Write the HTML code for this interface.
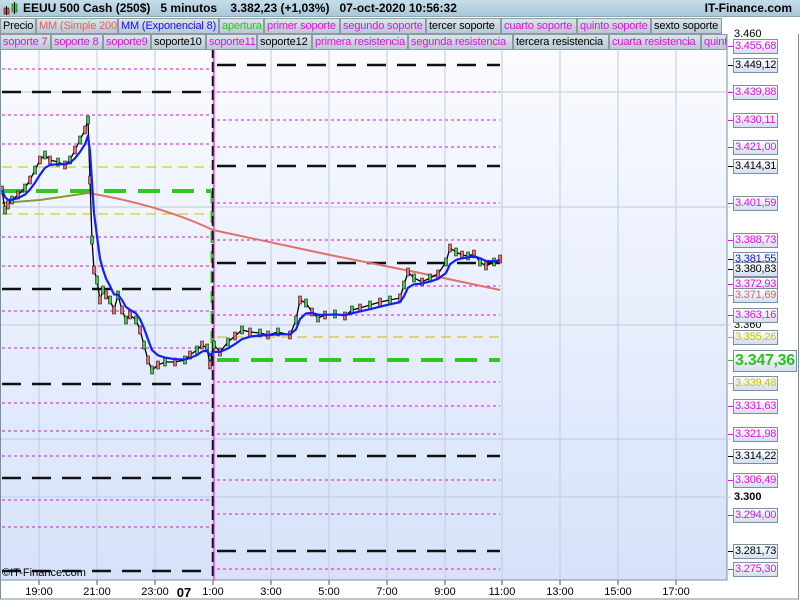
<!DOCTYPE html>
<html><head><meta charset="utf-8"><style>
*{margin:0;padding:0;box-sizing:border-box}
body{width:800px;height:600px;overflow:hidden;background:#fff;font-family:"Liberation Sans",sans-serif;position:relative}
#title{position:absolute;left:0;top:0;width:800px;height:17px;background:linear-gradient(#c6dde9,#a9c8da);border-bottom:1px solid #8aa;font-weight:bold;font-size:12px;line-height:17px}
.lg{position:absolute;height:16px;font-size:11px;line-height:15px;letter-spacing:-0.15px;background:linear-gradient(#dce4ea,#b8c8d2);border:1px solid #8a9aa8;padding-left:2px;white-space:nowrap;overflow:hidden}
.ax{position:absolute;left:733px;width:45px;height:15px;font-size:11px;letter-spacing:-0.2px;line-height:13px;text-align:left;padding-left:1px;background:linear-gradient(#fff,#d4def0);border:1px solid #7a8fa0;white-space:nowrap;overflow:hidden}
.pl{position:absolute;left:734px;font-size:11px;line-height:13px}
.tk{position:absolute;left:728px;width:5px;height:1px}
.tl{position:absolute;top:586px;font-size:11px;transform:translateX(-50%)}
</style></head><body>
<div id="title"><svg style="position:absolute;left:3px;top:2px" width="16" height="14"><rect x="1" y="6" width="5" height="6" fill="#e05050" stroke="#600" stroke-width=".6"/><line x1="3.5" y1="4" x2="3.5" y2="13" stroke="#000"/><rect x="9" y="2" width="5" height="8" fill="#40c040" stroke="#060" stroke-width=".6"/><line x1="11.5" y1="0" x2="11.5" y2="12" stroke="#000"/></svg>
<span style="position:absolute;left:23px">EEUU 500 Cash (250$)&nbsp;&nbsp;&nbsp;5 minutos&nbsp;&nbsp;&nbsp;&nbsp;3.382,23 (+1,03%)&nbsp;&nbsp;&nbsp;07-oct-2020 10:56:32</span>
<span style="position:absolute;right:8px">IT-Finance.com</span></div>
<svg id="ch" style="position:absolute;left:0;top:34px" width="800" height="566"></svg>
<div id="ov"></div>
<script>
var L1=[[0,36,'Precio','#000'],[36,82,'MM (Simple 200)','#e06060'],[118,101,'MM (Exponencial 8)','#1010ff'],[219,45,'apertura','#30c020'],[264,76,'primer soporte','#e010e0'],[340,86,'segundo soporte','#e010e0'],[426,75,'tercer soporte','#000'],[501,76,'cuarto soporte','#e010e0'],[577,74,'quinto soporte','#e010e0'],[651,71,'sexto soporte','#000']];
var L2=[[0,51,'soporte 7','#e010e0'],[51,52,'soporte 8','#e010e0'],[103,48,'soporte9','#e010e0'],[151,55,'soporte10','#000'],[206,51,'soporte11','#e010e0'],[257,55,'soporte12','#000'],[312,96,'primera resistencia','#e010e0'],[408,105,'segunda resistencia','#e010e0'],[513,96,'tercera resistencia','#000'],[609,92,'cuarta resistencia','#e010e0'],[701,26,'quinta resistencia','#e010e0']];
var h='';
L1.forEach(function(a){h+='<div class="lg" style="top:18px;left:'+a[0]+'px;width:'+a[1]+'px;color:'+a[3]+'">'+a[2]+'</div>'});
L2.forEach(function(a){h+='<div class="lg" style="top:34px;left:'+a[0]+'px;width:'+a[1]+'px;color:'+a[3]+'">'+a[2]+'</div>'});
var AX=[[46,'3.455,68','#e010e0'],[65,'3.449,12','#000'],[92,'3.439,88','#e010e0'],[120,'3.430,11','#e010e0'],[147,'3.421,00','#e010e0'],[166,'3.414,31','#000'],[203,'3.401,59','#e010e0'],[240,'3.388,73','#e010e0'],[259,'3.381,55','#1010ff'],[269,'3.380,83','#000'],[284,'3.372,93','#e010e0'],[295,'3.371,69','#e06060'],[315,'3.363,16','#e010e0'],[337,'3.355,26','#c8c000'],[383,'3.339,48','#c8c000'],[406,'3.331,63','#e010e0'],[434,'3.321,98','#e010e0'],[456,'3.314,22','#000'],[480,'3.306,49','#e010e0'],[515,'3.294,00','#e010e0'],[551,'3.281,73','#000'],[569,'3.275,30','#e010e0']];
h+='<div class="pl" style="top:28px">3.460</div><div class="pl" style="top:319px">3.360</div><div class="pl" style="top:491px;font-weight:bold">3.300</div>';
AX.forEach(function(a){h+='<div class="tk" style="top:'+a[0]+'px;background:'+a[2]+'"></div><div class="ax" style="top:'+(a[0]-7)+'px;color:'+a[2]+'">'+a[1]+'</div>'});
h+='<div class="tk" style="top:360px;background:#30c020"></div><div class="ax" style="top:350px;height:22px;width:64px;font-size:16px;line-height:20px;font-weight:bold;letter-spacing:-0.3px;color:#30c020">3.347,36</div>';
[[39,'19:00'],[97,'21:00'],[155,'23:00'],[213,'1:00'],[271,'3:00'],[329,'5:00'],[387,'7:00'],[445,'9:00'],[502,'11:00'],[560,'13:00'],[618,'15:00'],[676,'17:00']].forEach(function(t){h+='<div class="tl" style="left:'+t[0]+'px">'+t[1]+'</div>'});
h+='<div class="tl" style="left:184px;font-weight:bold;font-size:13px;top:585px">07</div>';
h+='<div style="position:absolute;left:2px;top:567px;font-size:11px">©IT-Finance.com</div>';
document.getElementById('ov').innerHTML=h;
function Y(y){return y-34}
var s='<defs><linearGradient id="bg" x1="0" y1="0" x2="0" y2="1"><stop offset="0" stop-color="#fbfcff"/><stop offset="1" stop-color="#d6e2fa"/></linearGradient></defs>';
s+='<rect x="0" y="0" width="727" height="546" fill="url(#bg)" stroke="#7a8fa0"/>';
[39,97,155,213,271,329,387,445,502,560,618,676].forEach(function(x){s+='<line x1="'+x+'" y1="0" x2="'+x+'" y2="551" stroke="#c0cce0"/>'});
[92,207,325,439,497].forEach(function(y){s+='<line x1="0" y1="'+Y(y)+'" x2="731" y2="'+Y(y)+'" stroke="#c0cce0"/>'});
function ln(x1,x2,y,t){var y2=Y(y);
 if(t=='k')s+='<line x1="'+x1+'" y1="'+y2+'" x2="'+x2+'" y2="'+y2+'" stroke="#111" stroke-width="2.5" stroke-dasharray="19,11"/>';
 else if(t=='m')s+='<line x1="'+x1+'" y1="'+y2+'" x2="'+x2+'" y2="'+y2+'" stroke="#e010e0" stroke-width="1" stroke-dasharray="3,3"/>';
 else if(t=='y')s+='<line x1="'+x1+'" y1="'+y2+'" x2="'+x2+'" y2="'+y2+'" stroke="#d0c000" stroke-width="1" stroke-dasharray="10,6"/>';
 else if(t=='g')s+='<line x1="'+x1+'" y1="'+y2+'" x2="'+x2+'" y2="'+y2+'" stroke="#30c820" stroke-width="4" stroke-dasharray="22,12"/>';
}
[[69,'m'],[92,'k'],[115,'m'],[144,'m'],[167,'y'],[191,'g'],[214,'y'],[237,'m'],[266,'m'],[289,'k'],[311,'m'],[348,'m'],[384,'k'],[403,'m'],[431,'m'],[456,'m'],[478,'k'],[500,'m'],[527,'m'],[571,'k']].forEach(function(a){ln(2,211,a[0],a[1])});
[[65,'k'],[92,'m'],[120,'m'],[147,'m'],[166,'k'],[203,'m'],[240,'m'],[263,'k'],[286,'m'],[315,'m'],[337,'y'],[360,'g'],[382,'m'],[406,'m'],[434,'m'],[456,'k'],[480,'m'],[514,'m'],[551,'k'],[569,'m']].forEach(function(a){ln(217,500,a[0],a[1])});
s+='<line x1="212" y1="'+Y(191)+'" x2="212" y2="'+Y(360)+'" stroke="#30c820" stroke-width="3" stroke-dasharray="12,8"/>';
s+='<line x1="213" y1="'+Y(48)+'" x2="213" y2="546" stroke="#111" stroke-width="2.5" stroke-dasharray="10,4"/>';
s+='<line x1="214" y1="'+Y(48)+'" x2="214" y2="546" stroke="#e010e0" stroke-width="1"/>';
s+='<path d="M88 '+Y(193)+' Q160 '+Y(205)+' 213 '+Y(230)+' L330 '+Y(255)+' L420 '+Y(273)+' L500 '+Y(290)+'" fill="none" stroke="#e07070" stroke-width="2"/>';
s+='<path d="M2 '+Y(203)+' L40 '+Y(200)+' L88 '+Y(193)+'" fill="none" stroke="#8a9a30" stroke-width="2"/>';
var P=[[2,190],[5,210],[8,205],[12,200],[18,195],[25,188],[30,180],[35,170],[40,160],[45,155],[50,160],[58,162],[65,165],[70,160],[75,150],[80,140],[85,130],[88,120],[90,180],[92,240],[94,270],[97,280],[100,300],[103,290],[106,295],[110,300],[114,310],[118,295],[122,310],[126,320],[130,315],[136,320],[140,330],[144,345],[148,360],[152,370],[158,365],[165,362],[175,362],[185,360],[190,355],[197,350],[202,345],[207,348],[210,365],[214,345],[220,352],[228,342],[235,336],[242,330],[250,332],[260,333],[268,335],[278,332],[290,335],[296,320],[300,300],[306,303],[312,312],[318,318],[325,315],[335,314],[345,316],[352,310],[360,308],[370,305],[380,302],[390,300],[400,298],[404,285],[408,272],[414,278],[422,282],[430,278],[438,274],[446,262],[450,248],[456,252],[462,255],[468,256],[474,254],[480,262],[486,266],[494,262],[500,259]];
var d='';P.forEach(function(p,i){d+=(i?'L':'M')+p[0]+' '+Y(p[1])+' '});
s+='<path d="'+d+'" fill="none" stroke="#000" stroke-width="1.3"/>';
for(var i=0;i<P.length;i+=1){var p=P[i];var up=i%2;s+='<rect x="'+(p[0]-1.5)+'" y="'+(Y(p[1])-4)+'" width="3" height="8" fill="'+(up?'#50c050':'#e07070')+'" stroke="#000" stroke-width=".5"/>'}
var e=P[0][1],d2='';P.forEach(function(p,i){e=e+(p[1]-e)*0.35;d2+=(i?'L':'M')+p[0]+' '+Y(e)+' '});
s+='<path d="'+d2+'" fill="none" stroke="#1020ff" stroke-width="2.2" stroke-linejoin="round"/>';
[39,97,155,213,271,329,387,445,502,560,618,676].forEach(function(x){s+='<line x1="'+x+'" y1="546" x2="'+x+'" y2="551" stroke="#555"/>'});
s+='<rect x="0.5" y="-34" width="798" height="599" fill="none" stroke="#7a8fa0"/>';
document.getElementById('ch').innerHTML=s;
</script>
</body></html>
